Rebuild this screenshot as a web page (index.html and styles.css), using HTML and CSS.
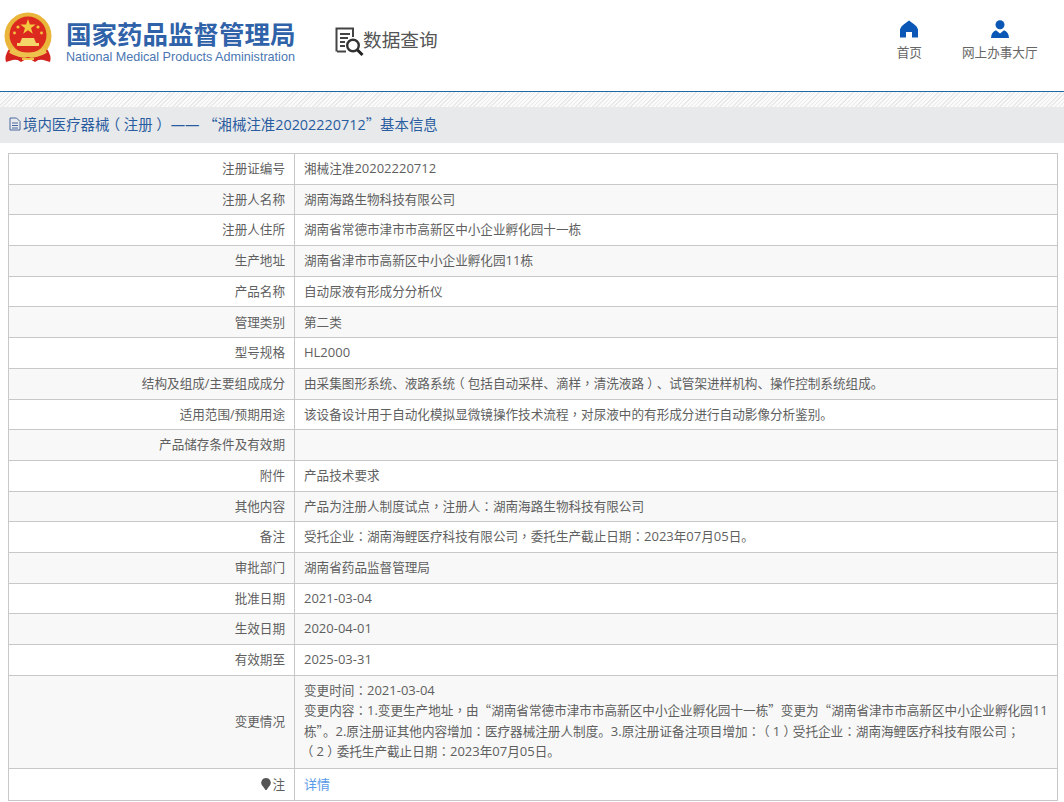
FILE: index.html
```html
<!DOCTYPE html>
<html>
<head>
<meta charset="utf-8">
<title>数据查询</title>
<link rel="stylesheet" href="styles.css">
</head>
<body>
<header class="top">
  <div class="brand">
    <svg class="emblem" viewBox="0 0 48 52" aria-hidden="true">
      <path d="M5 37 Q0 44 2 50 L12 47 L17 50 L24 46 L31 50 L36 47 L46 50 Q48 44 43 37 Z" fill="#d3231f"/>
      <circle cx="24" cy="24" r="23.5" fill="#e9b53a"/>
      <circle cx="24" cy="23" r="18.5" fill="#dc2a1e"/>
      <path d="M24 7l1.9 5.6h5.8l-4.7 3.5 1.8 5.6-4.8-3.5-4.8 3.5 1.8-5.6-4.7-3.500h5.8z" fill="#f3c93f"/>
      <circle cx="14" cy="15" r="1.6" fill="#f3c93f"/><circle cx="34" cy="15" r="1.6" fill="#f3c93f"/>
      <circle cx="10.500" cy="21" r="1.4" fill="#f3c93f"/><circle cx="37.500" cy="21" r="1.4" fill="#f3c93f"/>
      <path d="M16 31l2-5h12l2 5h3v3H13v-3z" fill="#f3d56a"/>
      <path d="M8 36q16 9 32 0l3 5q-19 11-38 0z" fill="#eec14c"/>
      <path d="M5 41q19 10 38 0l1 6-10 1-10-3-10 3-10-1z" fill="#d3231f"/>
      <path d="M18 46h12v2H18z" fill="#eec14c"/>
    </svg>
    <div class="names">
      <div class="cn">国家药品监督管理局</div>
      <div class="en">National Medical Products Administration</div>
    </div>
    <div class="query">
      <svg class="qicon" viewBox="0 0 30 30" aria-hidden="true">
        <path d="M1.500 24.500V1.500H18V10" fill="none" stroke="#444" stroke-width="2"/>
        <path d="M2 24.500h9" fill="none" stroke="#444" stroke-width="2"/>
        <path d="M5 7h10M5 11h8M5 15h5M5 19h5" stroke="#444" stroke-width="2"/>
        <circle cx="18" cy="18.500" r="5.800" fill="none" stroke="#333" stroke-width="2.400"/>
        <path d="M22.500 23l5 5" stroke="#222" stroke-width="3"/>
      </svg>
      <span>数据查询</span>
    </div>
  </div>
  <nav class="nav">
    <a class="nav-item">
      <svg class="nav-icon" viewBox="0 0 18 17" aria-hidden="true"><path d="M9 0 L15 4.500 Q18 7 18 9 V17 H12 V11.500 H6 V17 H0 V9 Q0 7 3 4.500 Z" fill="#0b57b5"/></svg>
      <span>首页</span>
    </a>
    <a class="nav-item">
      <svg class="nav-icon" viewBox="0 0 18 18" aria-hidden="true"><circle cx="9" cy="4.700" r="4.500" fill="#0b57b5"/><path d="M0 18 Q0 12.500 5 10.300 L9 13.500 L13 10.300 Q18 12.500 18 18 Z" fill="#0b57b5"/></svg>
      <span>网上办事大厅</span>
    </a>
  </nav>
</header>
<div class="hatch"></div>
<h1 class="title">
  <svg class="doc" viewBox="0 0 12 14" aria-hidden="true"><path d="M1 1h6.500L11 4.500V13H1z" fill="none" stroke="#4a68a3"/><path d="M3 6h6M3 8.500h6M3 11h6" stroke="#4a68a3"/></svg>
  <span>境内医疗器械<span class="br">（</span>注册<span class="br">）</span> —— <span class="q">“</span>湘械注准20202220712<span class="q">”</span>基本信息</span>
</h1>
<table class="info">
  <colgroup><col class="c1"><col></colgroup>
  <tbody>
    <tr><th>注册证编号</th><td>湘械注准<span class="n">20202220712</span></td></tr>
    <tr><th>注册人名称</th><td>湖南海路生物科技有限公司</td></tr>
    <tr><th>注册人住所</th><td>湖南省常德市津市市高新区中小企业孵化园十一栋</td></tr>
    <tr><th>生产地址</th><td>湖南省津市市高新区中小企业孵化园<span class="n">11</span>栋</td></tr>
    <tr><th>产品名称</th><td>自动尿液有形成分分析仪</td></tr>
    <tr><th>管理类别</th><td>第二类</td></tr>
    <tr><th>型号规格</th><td><span class="n">HL2000</span></td></tr>
    <tr><th>结构及组成/主要组成成分</th><td>由采集图形系统、液路系统<span class="br">（</span>包括自动采样、滴样<span class="p">，</span>清洗液路<span class="br">）</span>、试管架进样机构、操作控制系统组成。</td></tr>
    <tr><th>适用范围/预期用途</th><td>该设备设计用于自动化模拟显微镜操作技术流程<span class="p">，</span>对尿液中的有形成分进行自动影像分析鉴别。</td></tr>
    <tr><th>产品储存条件及有效期</th><td></td></tr>
    <tr><th>附件</th><td>产品技术要求</td></tr>
    <tr><th>其他内容</th><td>产品为注册人制度试点<span class="p">，</span>注册人<span class="p">：</span>湖南海路生物科技有限公司</td></tr>
    <tr><th>备注</th><td>受托企业<span class="p">：</span>湖南海鲤医疗科技有限公司<span class="p">，</span>委托生产截止日期<span class="p">：</span><span class="n">2023</span>年<span class="n">07</span>月<span class="n">05</span>日。</td></tr>
    <tr><th>审批部门</th><td>湖南省药品监督管理局</td></tr>
    <tr><th>批准日期</th><td><span class="n">2021-03-04</span></td></tr>
    <tr><th>生效日期</th><td><span class="n">2020-04-01</span></td></tr>
    <tr><th>有效期至</th><td><span class="n">2025-03-31</span></td></tr>
    <tr><th>变更情况</th><td class="multi">变更时间<span class="p">：</span><span class="n">2021-03-04</span><br>变更内容<span class="p">：</span><span class="n">1.</span>变更生产地址<span class="p">，</span>由<span class="q">“</span>湖南省常德市津市市高新区中小企业孵化园十一栋<span class="q">”</span>变更为<span class="q">“</span>湖南省津市市高新区中小企业孵化园<span class="n">11</span>栋<span class="q">”</span>。<span class="n">2.</span>原注册证其他内容增加<span class="p">：</span>医疗器械注册人制度。<span class="n">3.</span>原注册证备注项目增加<span class="p">：</span><span class="br">（</span><span class="n">1</span><span class="br">）</span>受托企业<span class="p">：</span>湖南海鲤医疗科技有限公司<span class="p">；</span><span class="nb"><span class="br">（</span><span class="n">2</span><span class="br">）</span>委托</span>生产截止日期<span class="p">：</span><span class="n">2023</span>年<span class="n">07</span>月<span class="n">05</span>日。</td></tr>
    <tr class="last"><th><svg class="bulb" viewBox="0 0 10 12" aria-hidden="true"><path d="M5 0a4.800 4.800 0 0 1 3 8.500L5.500 12h-1L2 8.500A4.800 4.800 0 0 1 5 0z" fill="#555"/></svg>注</th><td><a class="more">详情</a></td></tr>
  </tbody>
</table>
</body>
</html>
```
FILE: styles.css
```css
html, body { margin: 0; padding: 0; background: #fff; }
body { font-family: "Open Sans", "Noto Sans CJK SC", sans-serif; font-size: 12.6px; color: #5f5f5f; overflow: hidden; }
.top { height: 91px; display: flex; justify-content: space-between; border-bottom: 1px solid #1f6aa5; }
.brand { display: flex; align-items: flex-start; }
.emblem { width: 48px; height: 52px; margin: 12px 0 0 4px; flex: none; }
.names { margin: 15px 0 0 14px; width: 232px; }
.cn { font-family: "Noto Sans CJK SC", sans-serif; font-weight: 700; font-size: 25.5px; line-height: 35px; color: #2f62a8; white-space: nowrap; }
.en { font-family: "Liberation Sans", sans-serif; font-size: 12.6px; line-height: 14px; color: #4a76b2; white-space: nowrap; }
.query { display: flex; align-items: flex-start; margin: 24px 0 0 37px; }
.qicon { width: 30px; height: 30px; flex: none; margin-top: 3px; }
.query span { font-family: "Noto Sans CJK SC", sans-serif; font-size: 18.7px; line-height: 30px; margin-left: -2px; color: #555; white-space: nowrap; }
.nav { display: flex; padding: 20px 26.5px 0 0; gap: 40px; }
.nav-item { display: flex; flex-direction: column; align-items: center; line-height: 18px; color: #666; }
.nav-icon { width: 18px; height: 18px; margin-bottom: 6px; }
.hatch { height: 15px; background: repeating-linear-gradient(135deg, #e9e9e9 0 1px, #fafafa 1px 3px); }
.title { display: flex; align-items: center; margin: 0 0 10px; height: 33px; padding: 0 0 3px 9px; background: #e8e9eb; font-weight: 400; font-size: 14.4px; color: #2a5d9f; white-space: nowrap; }
.doc { width: 12px; height: 14px; margin-right: 2px; flex: none; }
.info { width: 1050px; margin-left: 8px; border-collapse: collapse; table-layout: fixed; }
.c1 { width: 286px; }
.info th, .info td { border: 1px solid #c8c8c8; height: 28.7px; padding: 1px 9px 0; line-height: 18.5px; font-weight: 400; vertical-align: middle; text-align: left; }
.info th { text-align: right; }
.info tr:nth-child(even) th, .info tr:nth-child(even) td { background: #f8f8f8; }
.info .multi { padding-top: 5px; padding-bottom: 5px; line-height: 20.6px; }
.info .last th, .info .last td { height: 30px; }
.n, .p, .q, .br { line-height: 1; }
.n { font-size: 13px; }
.p { font-family: "Noto Sans CJK TC", sans-serif; }
.q { font-family: "Noto Sans CJK SC", sans-serif; }
.br { display: inline-block; width: 1em; text-align: center; font-family: "Noto Sans CJK SC", sans-serif; font-feature-settings: "halt"; }
.nb { white-space: nowrap; }
.bulb { width: 10px; height: 12px; vertical-align: -1px; margin-right: 1px; }
.more { color: #5a9be8; font-size: 13px; line-height: 1; }
```
